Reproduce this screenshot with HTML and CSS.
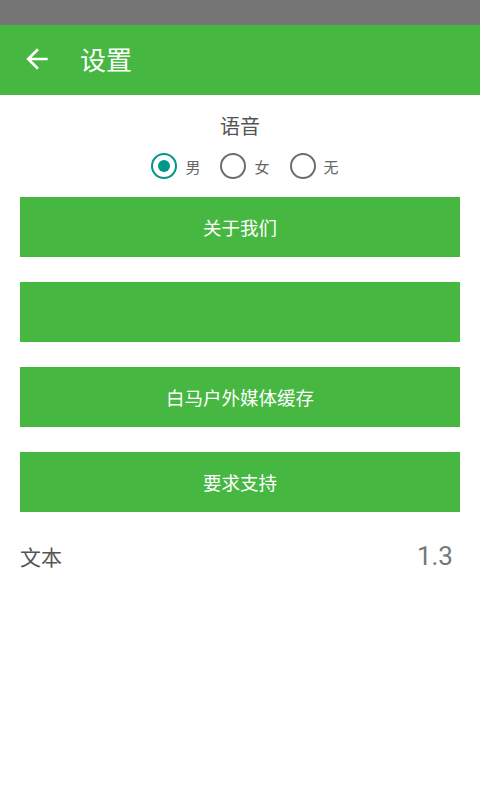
FILE: index.html
```html
<!DOCTYPE html>
<html lang="zh">
<head>
<meta charset="utf-8">
<link rel="stylesheet" href="styles.css">
</head>
<body>
<div class="status"></div>
<header class="appbar">
  <svg class="back" viewBox="0 0 24 24" width="32" height="32"><path d="M20 11H7.83l5.59-5.59L12 4l-8 8 8 8 1.41-1.41L7.83 13H20v-2z" fill="#fff"/></svg>
  <span class="title">设置</span>
</header>
<main class="content">
  <div class="voice">语音</div>
  <div class="radios">
    <label class="radio"><span class="circle checked"></span><span class="rtext">男</span></label>
    <label class="radio"><span class="circle"></span><span class="rtext">女</span></label>
    <label class="radio"><span class="circle"></span><span class="rtext">无</span></label>
  </div>
  <div class="btns">
    <div class="btn">关于我们</div>
    <div class="btn"></div>
    <div class="btn">白马户外媒体缓存</div>
    <div class="btn">要求支持</div>
  </div>
  <div class="row"><span class="label">文本</span><span class="ver">1.3</span></div>
</main>
</body>
</html>
```
FILE: styles.css
```css
html, body { margin: 0; padding: 0; background: #fff; }
body { width: 480px; height: 800px; font-family: Roboto, "Noto Sans CJK SC", sans-serif; }
.status { height: 25px; background: #757575; }
.appbar { height: 70px; background: #46b741; display: flex; align-items: center; }
.back { margin-left: 21px; margin-top: -2px; }
.title { color: #fff; font-size: 26px; margin-left: 27px; margin-top: -4px; }
.content { display: flex; flex-direction: column; padding: 0 20px; }
.voice { text-align: center; color: #555; font-size: 20px; line-height: 24px; margin-top: 20px; }
.radios { display: flex; justify-content: center; gap: 20px; margin-top: 13px; height: 28px; align-items: center; padding-left: 10px; }
.radio { display: flex; align-items: center; gap: 8px; }
.circle { width: 22px; height: 22px; border: 2px solid #6d6d6d; border-radius: 50%; box-sizing: content-box; position: relative; }
.circle.checked { border-color: #009688; }
.circle.checked::after { content: ""; position: absolute; left: 5px; top: 5px; width: 12px; height: 12px; border-radius: 50%; background: #009688; }
.rtext { color: #666; font-size: 15px; }
.btns { display: flex; flex-direction: column; gap: 25px; margin-top: 17px; }
.btn { height: 60px; background: #46b741; color: #fff; font-size: 18.5px; display: flex; align-items: center; justify-content: center; }
.row { display: flex; justify-content: space-between; align-items: center; margin-top: 28px; height: 32px; }
.label { color: #555; font-size: 21px; }
.ver { color: #777; font-size: 26px; margin-right: 7px; }
```
